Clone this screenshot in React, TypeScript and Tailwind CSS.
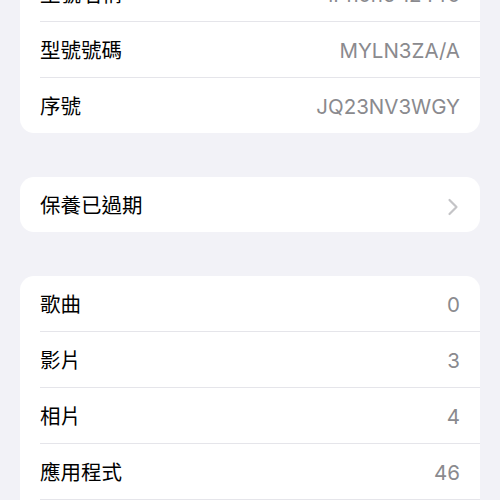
import React from "react";

type Row = { label: string; value?: string; chevron?: boolean };

const Card: React.FC<{ rows: Row[] }> = ({ rows }) => (
  <div className="mx-5 bg-white rounded-[14px] overflow-hidden">
    {rows.map((r, i) => (
      <div key={r.label} className="pl-5">
        <div
          className={
            "flex items-center justify-between pr-5 pt-[4px] " +
            (i < rows.length - 1 ? "h-[56px] border-b border-[#e5e5ea]" : "h-[55px]")
          }
        >
          <span className="text-[20.5px] text-black">{r.label}</span>
          {r.value && <span className="text-[20.5px] text-[#8a8a8e]">{r.value}</span>}
          {r.chevron && (
            <svg width="12" height="18" viewBox="0 0 12 18" className="mr-[1px]">
              <path
                d="M2.5 2 L9.5 9 L2.5 16"
                fill="none"
                stroke="#c4c4c7"
                strokeWidth="2.2"
                strokeLinecap="round"
                strokeLinejoin="round"
              />
            </svg>
          )}
        </div>
      </div>
    ))}
  </div>
);

export default function App() {
  return (
    <div
      className="w-[500px] h-[500px] overflow-hidden bg-[#f2f2f7]"
      style={{ fontFamily: 'Inter, "Noto Sans CJK TC", sans-serif' }}
    >
      <div className="-mt-[34px] flex flex-col">
        <Card
          rows={[
            { label: "型號名稱", value: "iPhone 12 Pro" },
            { label: "型號號碼", value: "MYLN3ZA/A" },
            { label: "序號", value: "JQ23NV3WGY" },
          ]}
        />
        <div className="h-[44px]" />
        <Card rows={[{ label: "保養已過期", chevron: true }]} />
        <div className="h-[44px]" />
        <Card
          rows={[
            { label: "歌曲", value: "0" },
            { label: "影片", value: "3" },
            { label: "相片", value: "4" },
            { label: "應用程式", value: "46" },
            { label: "容量", value: "128 GB" },
          ]}
        />
      </div>
    </div>
  );
}
